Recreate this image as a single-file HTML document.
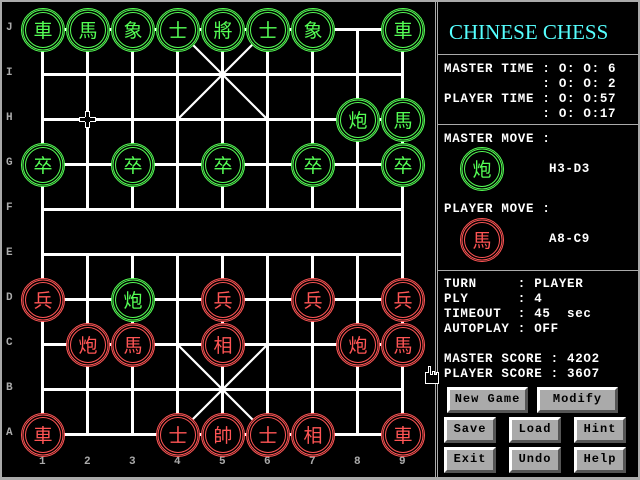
<!DOCTYPE html>
<html><head><meta charset="utf-8"><style>
html,body{margin:0;padding:0;background:#000;width:640px;height:480px;overflow:hidden;position:relative}
.h{position:absolute;height:3px;background:#fff}
.v{position:absolute;width:3px;background:#fff}
.g{position:absolute;background:#aaa}
.t{position:absolute;font-family:"Liberation Mono",monospace;font-weight:bold;font-size:12.5px;color:#fff;letter-spacing:0.7px;white-space:pre;line-height:15px}
.lb{position:absolute;font-family:"Liberation Mono",monospace;font-weight:bold;font-size:11px;color:#aaa}
svg{position:absolute;left:0;top:0}
.cj{font-family:"Noto Sans CJK TC","Noto Sans CJK SC","WenQuanYi Zen Hei",sans-serif;font-size:19px;text-anchor:middle}
.btn{position:absolute;box-sizing:border-box;height:26px;background:#aaa;border-style:solid;border-width:3px;border-color:#fff #555 #555 #fff;font-family:"Liberation Mono",monospace;font-weight:bold;font-size:12px;color:#000;text-align:center;line-height:19px;letter-spacing:1px;white-space:pre}
</style></head><body>
<div class="g" style="left:0;top:0;width:640px;height:2px"></div>
<div class="g" style="left:0;top:0;width:2px;height:480px"></div>
<div class="g" style="left:0;top:477px;width:640px;height:3px"></div>
<div class="g" style="left:638px;top:0;width:2px;height:480px"></div>
<div class="g" style="left:435px;top:0;width:1px;height:480px"></div>
<div class="g" style="left:437px;top:0;width:1px;height:480px"></div>
<div class="g" style="left:438px;top:54px;width:200px;height:1px"></div>
<div class="g" style="left:438px;top:124px;width:200px;height:1px"></div>
<div class="g" style="left:438px;top:270px;width:200px;height:1px"></div>

<div class="h" style="left:41px;top:28px;width:363px"></div>
<div class="h" style="left:41px;top:73px;width:363px"></div>
<div class="h" style="left:41px;top:118px;width:363px"></div>
<div class="h" style="left:41px;top:163px;width:363px"></div>
<div class="h" style="left:41px;top:208px;width:363px"></div>
<div class="h" style="left:41px;top:253px;width:363px"></div>
<div class="h" style="left:41px;top:298px;width:363px"></div>
<div class="h" style="left:41px;top:343px;width:363px"></div>
<div class="h" style="left:41px;top:388px;width:363px"></div>
<div class="h" style="left:41px;top:433px;width:363px"></div>
<div class="v" style="left:41px;top:28px;height:408px"></div>
<div class="v" style="left:401px;top:28px;height:408px"></div>
<div class="v" style="left:86px;top:28px;height:183px"></div>
<div class="v" style="left:131px;top:28px;height:183px"></div>
<div class="v" style="left:176px;top:28px;height:183px"></div>
<div class="v" style="left:221px;top:28px;height:183px"></div>
<div class="v" style="left:266px;top:28px;height:183px"></div>
<div class="v" style="left:311px;top:28px;height:183px"></div>
<div class="v" style="left:356px;top:28px;height:183px"></div>
<div class="v" style="left:86px;top:253px;height:183px"></div>
<div class="v" style="left:131px;top:253px;height:183px"></div>
<div class="v" style="left:176px;top:253px;height:183px"></div>
<div class="v" style="left:221px;top:253px;height:183px"></div>
<div class="v" style="left:266px;top:253px;height:183px"></div>
<div class="v" style="left:311px;top:253px;height:183px"></div>
<div class="v" style="left:356px;top:253px;height:183px"></div>

<div class="lb" style="left:6px;top:22px">J</div><div class="lb" style="left:6px;top:67px">I</div><div class="lb" style="left:6px;top:112px">H</div><div class="lb" style="left:6px;top:157px">G</div><div class="lb" style="left:6px;top:202px">F</div><div class="lb" style="left:6px;top:247px">E</div><div class="lb" style="left:6px;top:292px">D</div><div class="lb" style="left:6px;top:337px">C</div><div class="lb" style="left:6px;top:382px">B</div><div class="lb" style="left:6px;top:427px">A</div>
<div class="lb" style="left:39px;top:456px">1</div><div class="lb" style="left:84px;top:456px">2</div><div class="lb" style="left:129px;top:456px">3</div><div class="lb" style="left:174px;top:456px">4</div><div class="lb" style="left:219px;top:456px">5</div><div class="lb" style="left:264px;top:456px">6</div><div class="lb" style="left:309px;top:456px">7</div><div class="lb" style="left:354px;top:456px">8</div><div class="lb" style="left:399px;top:456px">9</div>

<svg width="640" height="480" viewBox="0 0 640 480" xmlns="http://www.w3.org/2000/svg">
<g stroke="#fff" stroke-width="2.2" fill="none">
<path d="M177.5 29.5L267.5 119.5M267.5 29.5L177.5 119.5M177.5 344.5L267.5 434.5M267.5 344.5L177.5 434.5"/>
</g>
<rect x="86" y="112" width="3" height="15" fill="#000"/>
<rect x="80" y="118" width="15" height="3" fill="#000"/>
<g stroke="#fff" stroke-width="1" fill="none" shape-rendering="crispEdges">
<path d="M79 117.5H85M90 117.5H96M79 121.5H85M90 121.5H96M85.5 111V117M85.5 122V128M89.5 111V117M89.5 122V128"/>
</g>
<defs>
<g id="pg"><circle r="21.5" fill="#000" stroke="#55ff55"/><circle r="20" fill="none" stroke="#55ff55"/><circle r="17.5" fill="none" stroke="#55ff55"/></g>
<g id="pr"><circle r="21.5" fill="#000" stroke="#ff5555"/><circle r="20" fill="none" stroke="#ff5555"/><circle r="17.5" fill="none" stroke="#ff5555"/></g>
</defs>
<g class="cj" fill="#55ff55">
<use href="#pg" x="43" y="30"/><text x="43" y="37">車</text>
<use href="#pg" x="88" y="30"/><text x="88" y="37">馬</text>
<use href="#pg" x="133" y="30"/><text x="133" y="37">象</text>
<use href="#pg" x="178" y="30"/><text x="178" y="37">士</text>
<use href="#pg" x="223" y="30"/><text x="223" y="37">將</text>
<use href="#pg" x="268" y="30"/><text x="268" y="37">士</text>
<use href="#pg" x="313" y="30"/><text x="313" y="37">象</text>
<use href="#pg" x="403" y="30"/><text x="403" y="37">車</text>
<use href="#pg" x="358" y="120"/><text x="358" y="127">炮</text>
<use href="#pg" x="403" y="120"/><text x="403" y="127">馬</text>
<use href="#pg" x="43" y="165"/><text x="43" y="172">卒</text>
<use href="#pg" x="133" y="165"/><text x="133" y="172">卒</text>
<use href="#pg" x="223" y="165"/><text x="223" y="172">卒</text>
<use href="#pg" x="313" y="165"/><text x="313" y="172">卒</text>
<use href="#pg" x="403" y="165"/><text x="403" y="172">卒</text>
<use href="#pg" x="133" y="300"/><text x="133" y="307">炮</text>
<use href="#pg" x="482" y="169"/><text x="482" y="176">炮</text>
</g>
<g class="cj" fill="#ff5555">
<use href="#pr" x="43" y="300"/><text x="43" y="307">兵</text>
<use href="#pr" x="223" y="300"/><text x="223" y="307">兵</text>
<use href="#pr" x="313" y="300"/><text x="313" y="307">兵</text>
<use href="#pr" x="403" y="300"/><text x="403" y="307">兵</text>
<use href="#pr" x="88" y="345"/><text x="88" y="352">炮</text>
<use href="#pr" x="133" y="345"/><text x="133" y="352">馬</text>
<use href="#pr" x="223" y="345"/><text x="223" y="352">相</text>
<use href="#pr" x="358" y="345"/><text x="358" y="352">炮</text>
<use href="#pr" x="403" y="345"/><text x="403" y="352">馬</text>
<use href="#pr" x="43" y="435"/><text x="43" y="442">車</text>
<use href="#pr" x="178" y="435"/><text x="178" y="442">士</text>
<use href="#pr" x="223" y="435"/><text x="223" y="442">帥</text>
<use href="#pr" x="268" y="435"/><text x="268" y="442">士</text>
<use href="#pr" x="313" y="435"/><text x="313" y="442">相</text>
<use href="#pr" x="403" y="435"/><text x="403" y="442">車</text>
<use href="#pr" x="482" y="240"/><text x="482" y="247">馬</text>
</g>
<path d="M425.5 383.5V372.5H428.5V366.5H430.5V374.5H432.5V371.5H434.5V374.5H436.5V372.5H438.5V383.5Z" fill="#000" stroke="#fff" stroke-width="1"/>
<text x="449" y="39" font-family="Liberation Serif,serif" font-size="21" fill="#55ffff">CHINESE CHESS</text>
</svg>

<div class="t" style="left:444px;top:62px">MASTER TIME : O: O: 6
            : O: O: 2
PLAYER TIME : O: O:57
            : O: O:17</div>
<div class="t" style="left:444px;top:132px">MASTER MOVE :</div>
<div class="t" style="left:549px;top:162px">H3-D3</div>
<div class="t" style="left:444px;top:202px">PLAYER MOVE :</div>
<div class="t" style="left:549px;top:232px">A8-C9</div>
<div class="t" style="left:444px;top:277px">TURN     : PLAYER
PLY      : 4
TIMEOUT  : 45  sec
AUTOPLAY : OFF</div>
<div class="t" style="left:444px;top:352px">MASTER SCORE : 42O2
PLAYER SCORE : 36O7</div>

<div class="btn" style="left:447px;top:387px;width:81px">New Game</div>
<div class="btn" style="left:537px;top:387px;width:81px">Modify</div>
<div class="btn" style="left:444px;top:417px;width:52px">Save</div>
<div class="btn" style="left:509px;top:417px;width:52px">Load</div>
<div class="btn" style="left:574px;top:417px;width:52px">Hint</div>
<div class="btn" style="left:444px;top:447px;width:52px">Exit</div>
<div class="btn" style="left:509px;top:447px;width:52px">Undo</div>
<div class="btn" style="left:574px;top:447px;width:52px">Help</div>
</body></html>
